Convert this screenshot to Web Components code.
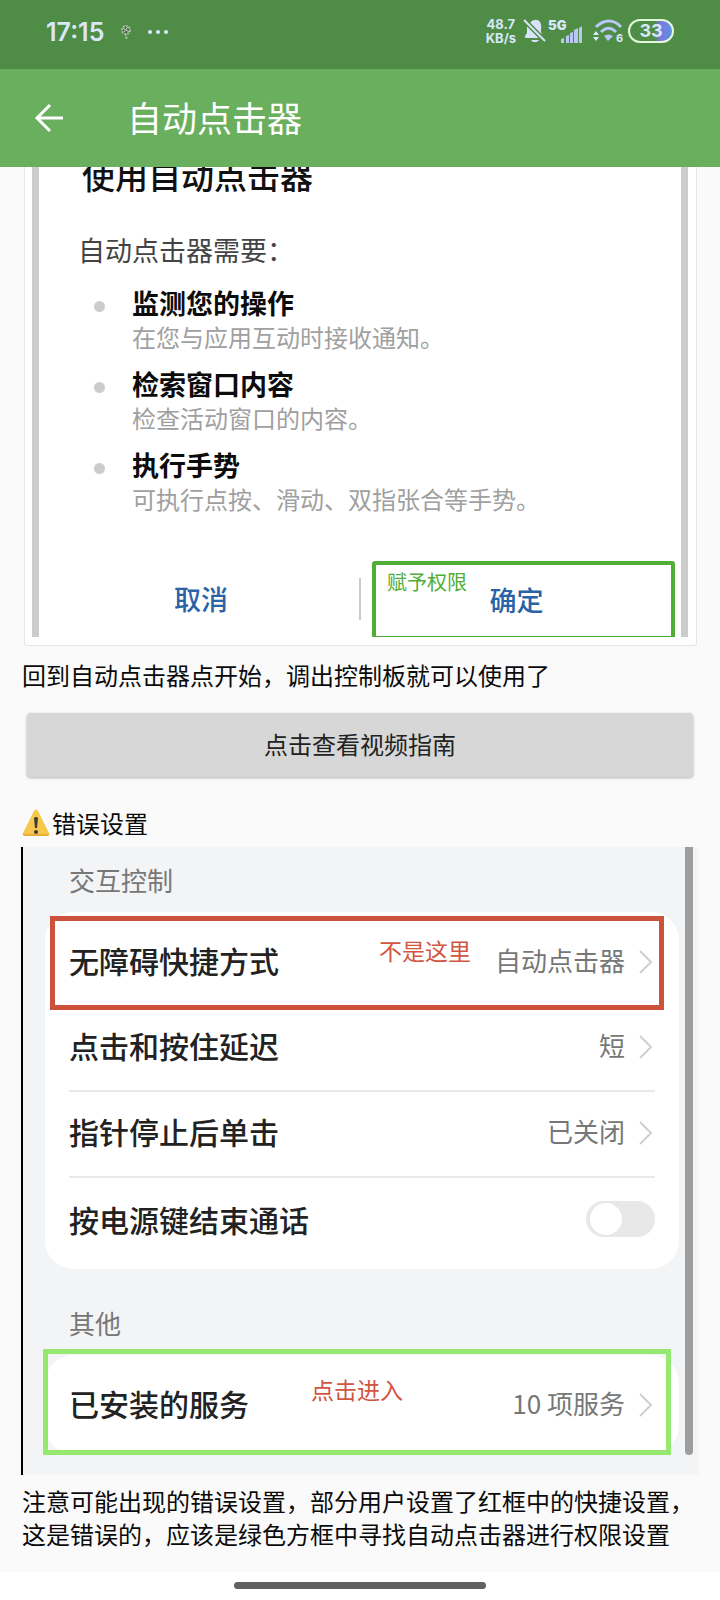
<!DOCTYPE html>
<html lang="zh-CN">
<head>
<meta charset="utf-8">
<meta name="viewport" content="width=device-width, initial-scale=1">
<title>自动点击器</title>
<style>
  html { background: #fafafa; }
  body { margin: 0; font-family: "Noto Sans CJK SC", sans-serif; color: #111; }
</style>
</head>
<body>
<guide-page></guide-page>

<script>
const define = (name, html) => {
  const tpl = document.createElement('template');
  tpl.innerHTML = html;
  customElements.define(name, class extends HTMLElement {
    constructor() {
      super();
      this.attachShadow({ mode: 'open' }).append(tpl.content.cloneNode(true));
    }
  });
};

define('status-bar', `
  <style>
    :host { display: flex; align-items: center; height: 69px; padding: 0 46px; box-sizing: border-box;
      background: #4f8c46; color: #d8e8fa; font-family: Inter, sans-serif; font-weight: 700; }
    .time { font-size: 25px; line-height: 32px; font-weight: 600; }
    .app { margin-left: 16px; }
    .dots { margin-left: 15px; }
    .right { margin-left: auto; display: flex; align-items: center; height: 32px; padding-bottom: 7px; }
    .time, .app, .dots { margin-bottom: 6px; }
    .speed { font-size: 13px; line-height: 14px; text-align: center; margin-right: 7px; }
    .net { display: grid; grid-template-columns: 13px 22px; margin: 0 10px 0 2px; height: 26px; }
    .net b { font-size: 13px; line-height: 14px; }
    .net svg { align-self: end; }
    .battery { box-sizing: border-box; width: 46px; height: 24px; border: 2px solid #e4f7d8; border-radius: 12px;
      margin-left: 4px; font-size: 18px; line-height: 20px; text-align: center;
      background: linear-gradient(90deg, transparent 58%, #7d78e0 72%, #5a92e0 100%); }
    svg { display: block; overflow: visible; }
  </style>
  <span class="time">17:15</span>
  <svg class="app" width="12" height="16" viewBox="0 0 12 16" fill="none" stroke="#a9c3a6"><circle cx="6" cy="6" r="4" fill="#4b6b48" stroke-dasharray="2 1" stroke-width="2"/><path d="M3 4l6 4M8 3L4 8" stroke="#c3d3c1"/><path d="M6 10v4M5 14h3" /></svg>
  <svg class="dots" width="22" height="6" viewBox="0 0 22 6" fill="#d8e8fa"><circle cx="3" cy="3" r="2"/><circle cx="11" cy="3" r="2"/><circle cx="19" cy="3" r="2"/></svg>
  <div class="right">
    <div class="speed">48.7<br>KB/s</div>
    <svg width="23" height="26" viewBox="0 0 23 26" fill="#d8e2fb"><path d="M8 4C10 1 15 1 17 4c2 3 1 7 1 10l2 6H4c-2 0-3-1-2-2l2-3V9z"/><path d="M8 22h8c-2 3-6 3-8 0z"/><path d="M0 1l22 22" stroke="#4f8c46" stroke-width="5"/><path d="M1 2l21 21" stroke="#d8e2fb" stroke-width="2"/></svg>
    <div class="net"><b>5G</b><svg width="22" height="18" viewBox="0 0 22 18" fill="#b9c8f3"><path d="M0 13l3-1v5H0zM5 10l3-1v8H5zM9 7l3-1v11H9zM13 4l4-2v15h-4zM18 2l3-2v17h-3z"/></svg></div>
    <svg width="31" height="28" viewBox="0 0 31 28"><g fill="none" stroke="#b9c8f8" stroke-width="3"><path d="M3 10c8-8 18-8 25 0"/><path d="M8 15c5-5 10-5 15 0"/></g><path d="M11 19c3-2 6-2 9 0l-5 5z" fill="#b9c8f8"/><path d="M0 18l3-4 3 4zM0 20l3 4 3-4z" fill="#d8e8fa"/><text x="23" y="25" font-size="11" fill="#d8e8fa">6</text></svg>
    <div class="battery">33</div>
  </div>`);

define('app-bar', `
  <style>
    :host { display: flex; align-items: center; gap: 61px; height: 98px; padding: 0 32px; box-sizing: border-box;
      background: #69af5d; color: #fff; }
    button { border: 0; padding: 0; background: none; color: inherit; width: 34px; height: 34px; }
    svg { display: block; }
    h1 { margin: 0; padding-bottom: 2px; font-size: 35px; line-height: 48px; font-weight: 400; }
  </style>
  <button type="button" aria-label="返回"><svg width="34" height="34" viewBox="0 0 34 34" fill="none" stroke="#fff" stroke-width="3"><path d="M31 17H6M18 4L5 17l13 13"/></svg></button>
  <h1><slot></slot></h1>`);

define('permission-item', `
  <style>
    :host { display: grid; grid-template-columns: 11px 1fr; column-gap: 27px; }
    i { width: 11px; height: 11px; border-radius: 50%; background: #ccc; margin-top: 16px; }
    h3, p { margin: 0; }
    h3 { font-size: 27px; line-height: 36px; font-weight: 700; color: #0c0c0c; }
    p { font-size: 24px; line-height: 32px; font-weight: 400; color: #a0a0a0; }
  </style>
  <i></i><div><h3><slot name="title"></slot></h3><p><slot></slot></p></div>`);

define('permission-dialog', `
  <style>
    :host { display: block; margin: 0 2px 0 3px; padding: 0 8px 8px 7px; background: #fff; overflow: hidden;
      border: 1px solid #e6e6e6; border-top: 0; border-radius: 0 0 3px 3px; }
    .sheet { border: solid #ccc; border-width: 0 7px; display: flow-root; }
    h2 { margin: -16px 43px 31px; font-size: 33px; line-height: 48px; font-weight: 500; }
    .need { margin: 0 39px 15px; font-size: 27px; line-height: 40px; font-weight: 400; color: #444; }
    .list { display: grid; gap: 13px; margin: 0 55px 46px; }
    .actions { display: grid; grid-template-columns: 1fr 2px 1fr; align-items: center; height: 76px; }
    .line { height: 42px; background: #ccc; }
    button { border: 0; padding: 0 0 0 4px; background: none; font: 500 27px/40px "Noto Sans CJK SC", sans-serif; color: #2a62a6; }
    .ok { position: relative; height: 76px; margin: 0 6px 0 11px; padding: 0 14px 2px 0;
      border: solid #50ad35; border-width: 4px 4px 1px; border-radius: 3px 3px 0 0; }
    .note { position: absolute; left: 11px; top: 3px; font-size: 20px; line-height: 28px; font-weight: 400; color: #50ad35; }
  </style>
  <div class="sheet">
    <h2>使用自动点击器</h2>
    <p class="need">自动点击器需要：</p>
    <div class="list">
      <permission-item><span slot="title">监测您的操作</span>在您与应用互动时接收通知。</permission-item>
      <permission-item><span slot="title">检索窗口内容</span>检查活动窗口的内容。</permission-item>
      <permission-item><span slot="title">执行手势</span>可执行点按、滑动、双指张合等手势。</permission-item>
    </div>
    <div class="actions">
      <button type="button">取消</button><span class="line"></span>
      <button type="button" class="ok"><span class="note">赋予权限</span>确定</button>
    </div>
  </div>`);

define('setting-row', `
  <style>
    :host { display: block; position: relative; height: 86px; box-sizing: border-box; }
    :host([divided]) { border-bottom: 2px solid #e9e9ea; }
    button { all: unset; box-sizing: border-box; display: flex; align-items: center; width: 100%; height: 100%; padding: 0 2px 2px 0; }
    .label { flex: 1; padding-bottom: 4px; font-size: 30px; line-height: 44px; font-weight: 500; color: #222; }
    .value { padding-bottom: 4px; font-size: 26px; line-height: 36px; color: #777; }
    svg { margin-left: 13px; }
    .mark { position: absolute; border: 5px solid; pointer-events: none; }
    .note { position: absolute; font-size: 23px; line-height: 28px; color: #d1553f; }
    .mark, .note { display: none; }
    :host([mark]) .mark, :host([mark]) .note { display: block; }
    :host([mark=wrong]) .mark { inset: -4px -9px -4px -19px; border-color: #cc523c; }
    :host([mark=wrong]) .note { right: 184px; top: 16px; }
    :host([mark=right]) .mark { inset: -14px -16px -6px -26px; border-color: #96e970; }
    :host([mark=right]) .note { right: 252px; top: 12px; }
  </style>
  <button type="button"><span class="label"><slot></slot></span><span class="value"><slot name="value"></slot></span>
    <svg width="15" height="24" viewBox="0 0 15 24" fill="none" stroke="#cfcfcf" stroke-width="2"><path d="M2 1l11 11L2 23"/></svg></button>
  <span class="mark"></span><span class="note"><slot name="note"></slot></span>`);

define('switch-row', `
  <style>
    :host { display: block; }
    label { display: flex; align-items: center; justify-content: space-between; height: 86px; padding-bottom: 4px; box-sizing: border-box; font-size: 30px; line-height: 44px; font-weight: 500; color: #222; }
    input { appearance: none; box-sizing: border-box; width: 69px; height: 36px; margin: 0; padding: 2px 4px; border-radius: 18px; background: #e8e8e8; }
    input::before { content: ""; display: block; width: 32px; height: 32px; border-radius: 50%; background: #fff; }
    input:checked::before { margin-left: auto; }
  </style>
  <label><slot></slot><input type="checkbox" role="switch"></label>`);

define('settings-group', `
  <style>
    :host { display: block; }
    h3 { margin: 0; padding-left: 24px; font-size: 26px; line-height: 36px; font-weight: 400; color: #777; }
    .card { margin-top: 14px; padding: 8px 24px 5px; border-radius: 28px; background: #fff; }
  </style>
  <h3><slot name="title"></slot></h3><div class="card"><slot></slot></div>`);

define('settings-shot', `
  <style>
    :host { display: grid; grid-template-columns: 1fr 8px; column-gap: 6px; margin-top: 6px; padding-right: 6px;
      background: #f3f4f6; border-left: 2px solid #000; }
    .content { display: grid; gap: 36px; padding: 15px 0 21px 22px; }
    .bar { background: #9c9d9f; border-radius: 0 0 4px 4px; margin-bottom: 20px; }
  </style>
  <div class="content">
    <settings-group><span slot="title">交互控制</span>
      <setting-row mark="wrong">无障碍快捷方式<span slot="note">不是这里</span><span slot="value">自动点击器</span></setting-row>
      <setting-row divided>点击和按住延迟<span slot="value">短</span></setting-row>
      <setting-row divided>指针停止后单击<span slot="value">已关闭</span></setting-row>
      <switch-row>按电源键结束通话</switch-row>
    </settings-group>
    <settings-group><span slot="title">其他</span>
      <setting-row mark="right">已安装的服务<span slot="note">点击进入</span><span slot="value">10 项服务</span></setting-row>
    </settings-group>
  </div>
  <div class="bar"></div>`);

define('guide-page', `
  <style>
    :host { display: flex; flex-direction: column; min-height: 100vh; }
    main { padding: 0 21px 22px; }
    p, h2 { margin: 0; padding: 0 1px; font-size: 24px; line-height: 33px; font-weight: 400; color: #0a0a0a; }
    .after { margin-top: 12px; }
    .video { display: block; width: calc(100% - 12px); height: 64px; margin: 22px 6px 29px; padding: 0 0 4px; border: 0; border-radius: 4px;
      background: #d6d7d6; box-shadow: 0 1px 3px rgba(0,0,0,.3); font: 400 24px/33px "Noto Sans CJK SC", sans-serif; color: #222; }
    h2 { display: flex; align-items: center; gap: 2px; padding-bottom: 2px; }
    .last { margin-top: 9px; }
    footer { flex: 1; min-height: 28px; background: #fff; }
    footer i { display: block; width: 35%; height: 7px; margin: 10px auto 0; border-radius: 4px; background: #5f615f; }
  </style>
  <header><status-bar></status-bar><app-bar>自动点击器</app-bar></header>
  <main>
    <permission-dialog></permission-dialog>
    <p class="after">回到自动点击器点开始，调出控制板就可以使用了</p>
    <button type="button" class="video">点击查看视频指南</button>
    <h2><svg width="28" height="28" viewBox="0 0 28 28" aria-hidden="true"><path d="M12 2q2-3 4 0l11 22q1 3-2 3H3q-3 0-2-3z" fill="#f5c84c"/><path d="M1 25q0 2 2 2h22q2 0 2-2z" fill="#e8ad3c"/><path d="M12 9q2-2 4 0l-1 10h-2z" fill="#3b3a38"/><circle cx="14" cy="23" r="2" fill="#3b3a38"/></svg>错误设置</h2>
    <settings-shot></settings-shot>
    <p class="last">注意可能出现的错误设置，部分用户设置了红框中的快捷设置，这是错误的，应该是绿色方框中寻找自动点击器进行权限设置</p>
  </main>
  <footer><i></i></footer>`);
</script>
</body>
</html>
